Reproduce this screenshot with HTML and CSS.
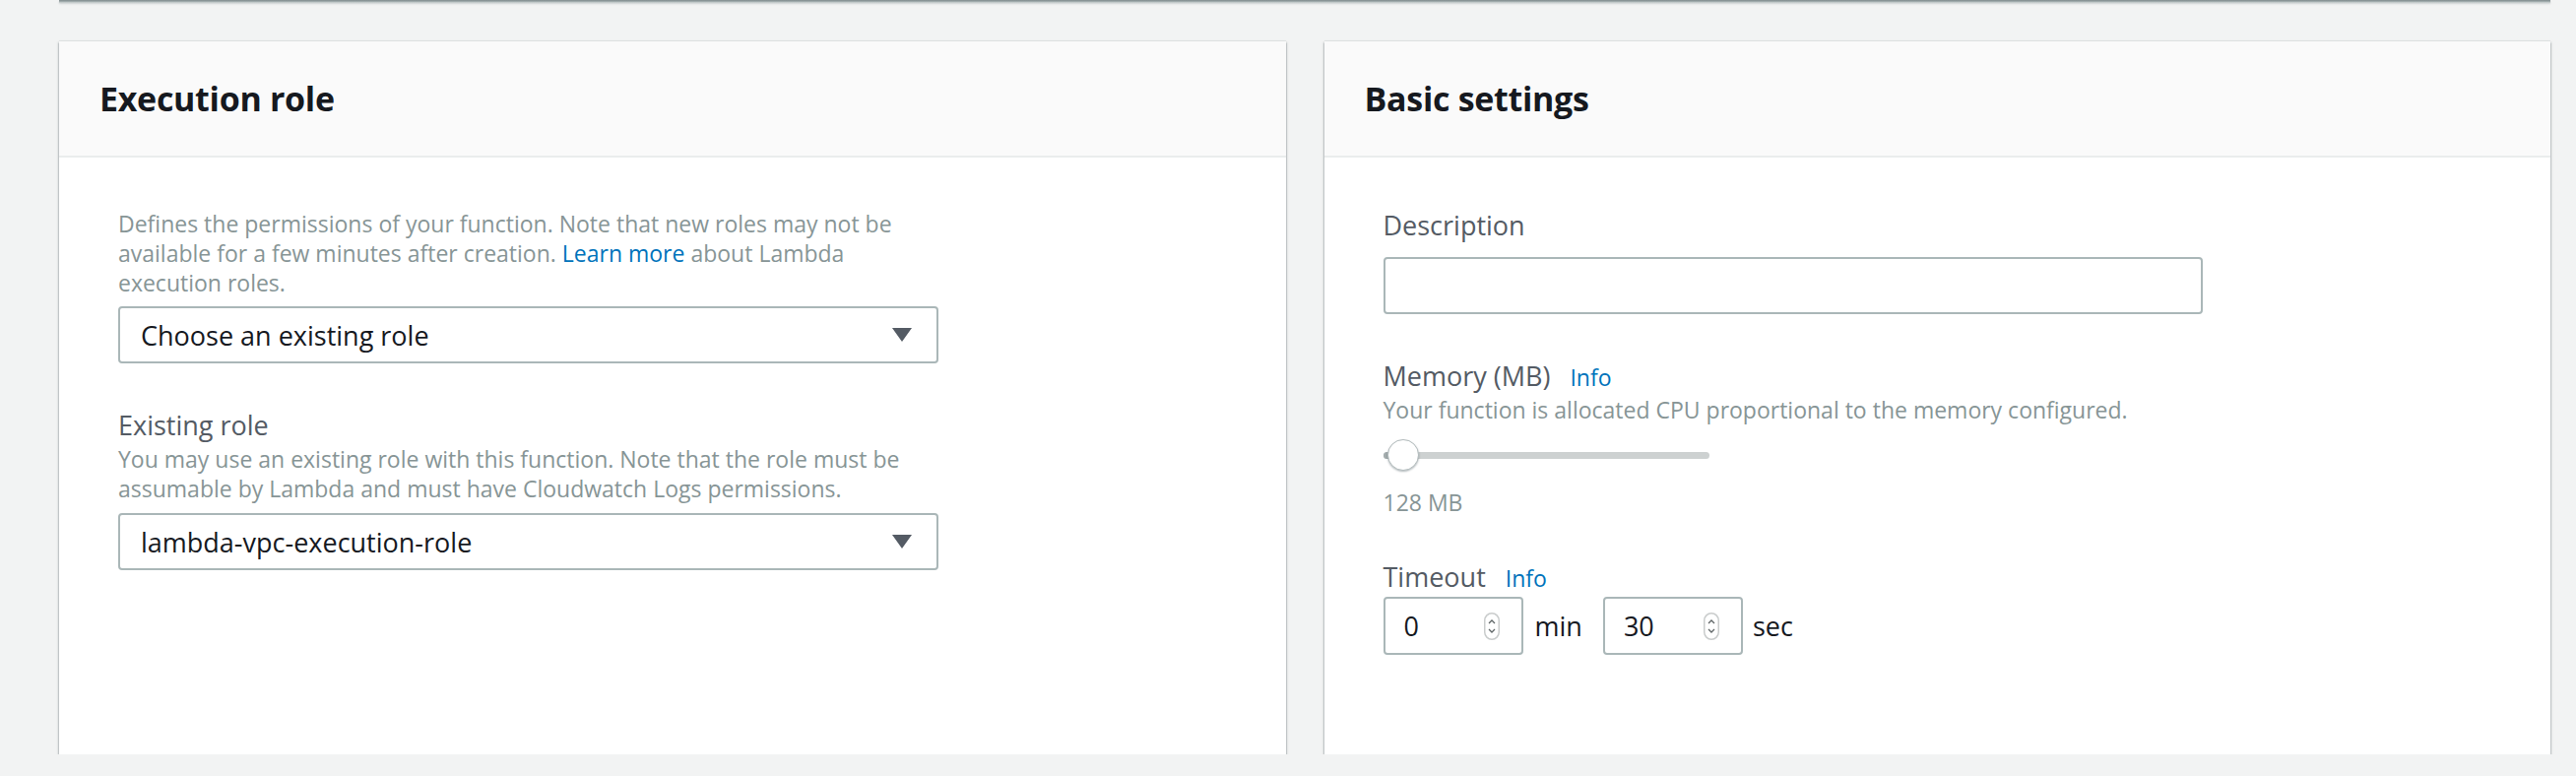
FILE: index.html
```html
<!DOCTYPE html>
<html lang="en">
<head>
<meta charset="utf-8">
<title>Lambda function configuration</title>
<link rel="stylesheet" href="styles.css">
</head>
<body>
<div class="page">
  <div class="prev-card"></div>
  <div class="columns">
    <section class="card">
      <div class="card-header"><h2>Execution role</h2></div>
      <div class="card-body">
        <p class="helper">Defines the permissions of your function. Note that new roles may not be available for a few minutes after creation. <a class="link" href="#">Learn more</a> about Lambda execution roles.</p>
        <div class="select select-first">
          <span class="select-value">Choose an existing role</span>
          <svg class="caret" width="20" height="14" viewBox="0 0 20 14"><path d="M0 0H20L10 14Z" fill="#545b64"/></svg>
        </div>
        <div class="field">
          <div class="label">Existing role</div>
          <p class="helper helper-tight">You may use an existing role with this function. Note that the role must be assumable by Lambda and must have Cloudwatch Logs permissions.</p>
          <div class="select select-after-helper">
            <span class="select-value">lambda-vpc-execution-role</span>
            <svg class="caret" width="20" height="14" viewBox="0 0 20 14"><path d="M0 0H20L10 14Z" fill="#545b64"/></svg>
          </div>
        </div>
      </div>
    </section>
    <section class="card">
      <div class="card-header"><h2>Basic settings</h2></div>
      <div class="card-body">
        <div class="label">Description</div>
        <div class="text-input"></div>
        <div class="field">
          <div class="label-row"><span class="label">Memory (MB)</span><a class="info" href="#">Info</a></div>
          <p class="helper helper-one">Your function is allocated CPU proportional to the memory configured.</p>
          <div class="slider">
            <div class="track"><div class="track-fill"></div></div>
            <div class="thumb"></div>
          </div>
          <div class="value">128 MB</div>
        </div>
        <div class="field field-timeout">
          <div class="label-row"><span class="label">Timeout</span><a class="info" href="#">Info</a></div>
          <div class="timeout-row">
            <div class="num-input">
              <span class="num-value">0</span>
              <svg class="stepper" width="16" height="28" viewBox="0 0 16 28"><rect x="0.75" y="0.75" width="14.5" height="26.5" rx="7.25" fill="#fff" stroke="#c9cccc" stroke-width="1.5"/><path d="M5 11L8 8L11 11M5 17L8 20L11 17" fill="none" stroke="#5f6566" stroke-width="1.3"/></svg>
            </div>
            <span class="unit unit-min">min</span>
            <div class="num-input">
              <span class="num-value">30</span>
              <svg class="stepper" width="16" height="28" viewBox="0 0 16 28"><rect x="0.75" y="0.75" width="14.5" height="26.5" rx="7.25" fill="#fff" stroke="#c9cccc" stroke-width="1.5"/><path d="M5 11L8 8L11 11M5 17L8 20L11 17" fill="none" stroke="#5f6566" stroke-width="1.3"/></svg>
            </div>
            <span class="unit unit-sec">sec</span>
          </div>
        </div>
      </div>
    </section>
  </div>
</div>
</body>
</html>
```
FILE: styles.css
```css
html, body {
  margin: 0;
  padding: 0;
}

body {
  background: #f2f3f3;
  font-family: "Open Sans", "Noto Sans", sans-serif;
  color: #16191f;
}

.page {
  padding: 0 26px 0 60px;
}

.prev-card {
  height: 3px;
  background: linear-gradient(#7d898b, #a6b0b1 60%, #d9dddd);
  box-shadow: 0 1px 2px rgba(0, 28, 36, 0.15);
}

.columns {
  display: grid;
  grid-template-columns: 1fr 1fr;
  column-gap: 39px;
  margin-top: 39px;
}

.card {
  background: #fff;
  box-shadow: 0 2px 1px 0 rgba(0, 28, 36, 0.4), 1px 1px 2px 0 rgba(0, 28, 36, 0.18), -1px 1px 2px 0 rgba(0, 28, 36, 0.18), 0 -1px 1px 0 rgba(0, 28, 36, 0.06);
}

.card-header {
  height: 116px;
  display: flex;
  align-items: center;
  padding: 0 41px;
  background: #fafafa;
  border-bottom: 2px solid #eaeded;
}

.card-header h2 {
  margin: 0;
  font-size: 34px;
  font-weight: 700;
  letter-spacing: -0.3px;
  color: #16191f;
}

.card-body {
  padding: 52px 60px 101px;
}

.helper {
  margin: 0;
  max-width: 833px;
  font-size: 23px;
  line-height: 30px;
  color: #879596;
}

.helper-tight {
  margin-top: 2px;
}

.helper-one {
  margin-top: 1px;
}

.link,
.info {
  color: #0073bb;
  text-decoration: none;
}

.select {
  width: 833px;
  height: 58px;
  box-sizing: border-box;
  border: 2px solid #aab7b8;
  border-radius: 4px;
  padding: 0 25px 0 21px;
  display: flex;
  align-items: center;
  justify-content: space-between;
  background: #fff;
}

.select-first {
  margin-top: 9px;
}

.select-after-helper {
  margin-top: 10px;
}

.select-value {
  font-size: 27px;
  color: #16191f;
}

.field {
  margin-top: 46px;
}

.field-timeout {
  margin-top: 44px;
}

.label {
  font-size: 27px;
  line-height: 34px;
  color: #545b64;
}

.label-row {
  display: flex;
  align-items: baseline;
  gap: 20px;
  line-height: 34px;
}

.info {
  font-size: 23px;
}

.text-input {
  width: 832px;
  height: 58px;
  box-sizing: border-box;
  margin-top: 15px;
  border: 2px solid #aab7b8;
  border-radius: 4px;
  background: #fff;
}

.slider {
  position: relative;
  width: 331px;
  height: 32px;
  margin-top: 15px;
  display: flex;
  align-items: center;
}

.track {
  width: 100%;
  height: 7px;
  border-radius: 4px;
  background: #cdd1d1;
  overflow: hidden;
}

.track-fill {
  width: 20px;
  height: 100%;
  background: #a3acad;
}

.thumb {
  position: absolute;
  left: 4px;
  top: 0;
  width: 30px;
  height: 30px;
  border-radius: 50%;
  background: #fff;
  border: 1px solid #b3bcbd;
  box-shadow: 0 1px 2px rgba(0, 28, 36, 0.3);
}

.value {
  margin-top: 17px;
  font-size: 23px;
  line-height: 30px;
  color: #879596;
}

.timeout-row {
  display: flex;
  align-items: center;
  margin-top: 2px;
}

.num-input {
  width: 142px;
  height: 59px;
  box-sizing: border-box;
  border: 2px solid #aab7b8;
  border-radius: 4px;
  padding: 0 22px 0 19px;
  display: flex;
  align-items: center;
  justify-content: space-between;
  background: #fff;
}

.num-value {
  font-size: 27px;
  color: #16191f;
}

.unit {
  font-size: 27px;
  color: #16191f;
}

.unit-min {
  margin: 0 21px 0 12px;
}

.unit-sec {
  margin-left: 10px;
}
```
